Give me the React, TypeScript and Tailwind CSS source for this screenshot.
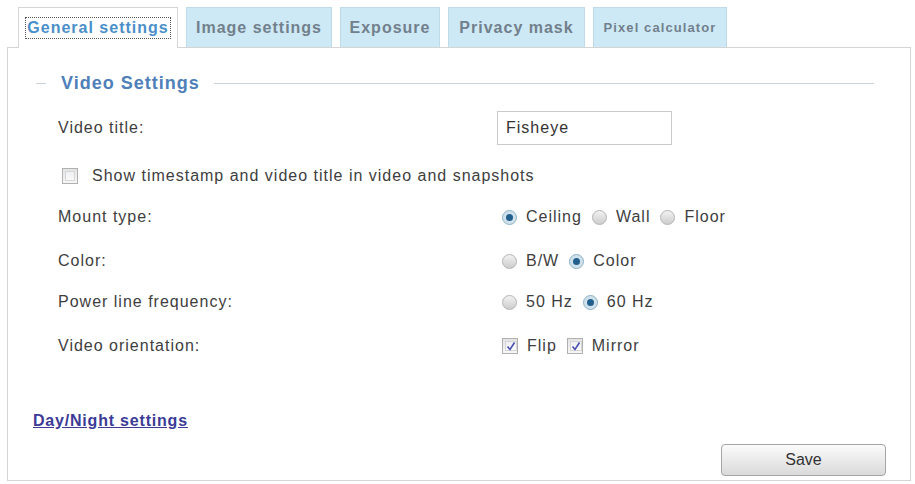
const tabs = [
  { label: 'General settings', w: 'w-[160px]', active: true },
  { label: 'Image settings', w: 'w-[146px]' },
  { label: 'Exposure', w: 'w-[100px]' },
  { label: 'Privacy mask', w: 'w-[137px]' },
  { label: 'Pixel calculator', w: 'w-[134px]', small: true },
]

const Radio = ({ checked }: { checked?: boolean }) =>
  checked ? (
    <span className="w-[15px] h-[15px] rounded-full border border-[#8fb2c6] bg-[#cfe2ec] flex items-center justify-center shrink-0">
      <span className="w-[7px] h-[7px] rounded-full bg-[#235f8c]" />
    </span>
  ) : (
    <span className="w-[15px] h-[15px] rounded-full border border-[#b4b4b4] bg-gradient-to-b from-[#f2f2f2] to-[#cdcdcd] shrink-0" />
  )

const Check = ({ checked }: { checked?: boolean }) => (
  <span className="w-[16px] h-[16px] border border-[#b0b0b0] bg-gradient-to-b from-[#e4e4e4] to-[#f7f7f7] p-[2px] shrink-0 flex">
    <span className="flex-1 border border-[#d6d6d6] bg-gradient-to-b from-[#eef0f4] to-[#fafafa] flex items-center justify-center">
      {checked && (
        <svg width="10" height="10" viewBox="0 0 10 10">
          <path d="M1.5 5.5 L4 8.5 L8.5 1.5" fill="none" stroke="#4b4fae" strokeWidth="1.6" />
        </svg>
      )}
    </span>
  </span>
)

const Opt = ({ children, on, box }: { children: string; on?: boolean; box?: boolean }) => (
  <span className="flex items-center gap-[9px] mr-[10px]">
    {box ? <Check checked={on} /> : <Radio checked={on} />}
    <span>{children}</span>
  </span>
)

const Row = ({ label, mt, children }: { label: string; mt: string; children: React.ReactNode }) => (
  <div className={`flex items-center h-[24px] ${mt}`}>
    <div className="w-[494px] pl-[50px]">{label}</div>
    <div className="flex items-center">{children}</div>
  </div>
)

export default function App() {
  return (
    <div className="w-[915px] h-[484px] bg-white font-['Liberation_Sans',Arial,sans-serif] text-[16px] tracking-[1px] text-[#3e3e3e]">
      {/* tabs */}
      <div className="flex items-end gap-[8px] pl-[18px] pt-[7px] relative z-10">
        {tabs.map((t) => (
          <div
            key={t.label}
            className={`${t.w} h-[40px] flex items-center justify-center font-bold ${
              t.active
                ? 'h-[41px] -mb-[1px] bg-white border border-b-0 border-[#d6d6d6] text-[#4a8fc9]'
                : 'bg-[#cde9f6] border border-[#c0dbe8] border-b-0 text-[#72808c]'
            } ${t.small ? 'text-[13px] tracking-[1.1px]' : ''}`}
          >
            {t.active ? (
              <span className="border border-dotted border-[#555] leading-[20px] px-[1px]">{t.label}</span>
            ) : (
              t.label
            )}
          </div>
        ))}
      </div>

      {/* panel */}
      <div className="ml-[7px] w-[904px] h-[434px] border border-[#d4d4d4] pt-[23px] flex flex-col">
        <div className="flex items-center h-[24px]">
          <span className="ml-[28px] w-[10px] h-px bg-[#c9d1d9]" />
          <span className="ml-[15px] text-[18px] font-bold text-[#4f80b9]">Video Settings</span>
          <span className="ml-[14px] w-[660px] h-px bg-[#c9d1d9]" />
        </div>

        <div className="flex items-center h-[34px] mt-[16px]">
          <div className="w-[489px] pl-[50px]">Video title:</div>
          <div className="w-[175px] h-[34px] border border-[#cacaca] flex items-center pl-[8px] text-[#333]">Fisheye</div>
        </div>

        <div className="flex items-center h-[24px] mt-[19px] pl-[54px] gap-[14px]">
          <Check />
          <span>Show timestamp and video title in video and snapshots</span>
        </div>

        <Row label="Mount type:" mt="mt-[17px]">
          <Opt on>Ceiling</Opt>
          <Opt>Wall</Opt>
          <Opt>Floor</Opt>
        </Row>
        <Row label="Color:" mt="mt-[20px]">
          <Opt>B/W</Opt>
          <Opt on>Color</Opt>
        </Row>
        <Row label="Power line frequency:" mt="mt-[17px]">
          <Opt>50 Hz</Opt>
          <Opt on>60 Hz</Opt>
        </Row>
        <Row label="Video orientation:" mt="mt-[20px]">
          <Opt box on>Flip</Opt>
          <Opt box on>Mirror</Opt>
        </Row>

        <div className="mt-[51px] pl-[25px] h-[24px] flex items-center">
          <a href="#" className="font-bold underline text-[#3b3b96] tracking-[0.8px]">Day/Night settings</a>
        </div>

        <div className="flex justify-end pr-[24px] mt-[11px]">
          <button className="w-[165px] h-[32px] rounded-[4px] border border-[#a5a5a5] bg-gradient-to-b from-[#fbfbfb] to-[#dadada] text-[#333] tracking-normal">
            Save
          </button>
        </div>
      </div>
    </div>
  )
}
